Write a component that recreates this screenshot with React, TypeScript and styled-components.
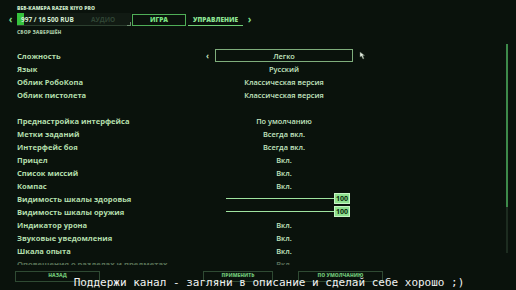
import React from 'react';
import styled, {createGlobalStyle} from 'styled-components';

const Global = createGlobalStyle`
  html, body { margin: 0; padding: 0; background: #0a120c; }
  body { width: 516px; height: 290px; overflow: hidden; }
`;

const Screen = styled.div`
  position: relative;
  width: 516px;
  height: 290px;
  background: #0a120c;
  font-family: 'Open Sans', 'Noto Sans', sans-serif;
  overflow: hidden;
  display: flex;
  flex-direction: column;
`;

const Header = styled.div`
  display: flex;
  flex-direction: column;
  padding: 5px 0 0 17px;
  height: 44px;
  flex-shrink: 0;
  box-sizing: border-box;
`;

const Tiny = styled.div<{$dim?: boolean}>`
  font-size: 5px;
  font-weight: 800;
  letter-spacing: 0.1px;
  line-height: 6px;
  color: ${(p) => (p.$dim ? '#9fbf9c' : '#c9e4c5')};
`;

const TabRow = styled.div`
  display: flex;
  align-items: center;
  height: 13px;
  margin: 2px 0 3px -13px;
`;

const Chevron = styled.span`
  width: 13px;
  font-size: 10px;
  font-weight: 700;
  color: #7fdc86;
  line-height: 13px;
  text-align: center;
`;

const Wallet = styled.div`
  position: relative;
  display: flex;
  align-items: center;
  width: 114px;
  height: 12px;
  background: #111a13;
  border-bottom: 1px solid #2c3f2f;
  &::after {
    content: '';
    position: absolute;
    right: 0;
    bottom: -1px;
    width: 3px;
    height: 3px;
    border-right: 1px solid #6f8f70;
    border-bottom: 1px solid #6f8f70;
  }
`;

const WalletFill = styled.div`
  position: absolute;
  left: 0;
  top: 0;
  bottom: 0;
  width: 7px;
  background: #36c23d;
`;

const WalletText = styled.span`
  position: relative;
  padding-left: 4px;
  font-size: 6.5px;
  font-weight: 700;
  color: #d5ecd2;
  width: 70px;
`;

const Dim = styled.span`
  font-size: 6.5px;
  font-weight: 700;
  color: #2f4433;
`;

const Tab = styled.div<{$active?: boolean}>`
  position: relative;
  display: flex;
  align-items: center;
  justify-content: center;
  height: 12px;
  box-sizing: border-box;
  font-size: 6.5px;
  font-weight: 800;
  color: ${(p) => (p.$active ? '#7be383' : '#8de293')};
  border: ${(p) => (p.$active ? '1px solid #4fae57' : 'none')};
  border-bottom: 1px solid ${(p) => (p.$active ? '#4fae57' : '#6fcf76')};
  width: ${(p) => (p.$active ? '54px' : '55px')};
  margin-left: ${(p) => (p.$active ? '1px' : '2px')};
`;

const Body = styled.div`
  display: flex;
  flex: 1;
  min-height: 0;
  overflow: hidden;
`;

const List = styled.div`
  flex: 1;
  display: flex;
  flex-direction: column;
  padding-top: 5px;
`;

const Row = styled.div<{$fade?: boolean}>`
  display: grid;
  grid-template-columns: 189px 9px 138px 20px;
  align-items: center;
  flex-shrink: 0;
  height: 13px;
  padding-left: 17px;
  opacity: ${(p) => (p.$fade ? 0.45 : 1)};
`;

const Label = styled.span`
  font-size: 7.6px;
  font-weight: 700;
  color: #b3dfab;
  white-space: nowrap;
`;

const Arrow = styled.span`
  font-size: 8px;
  font-weight: 700;
  color: #c9e8c4;
`;

const Value = styled.div<{$boxed?: boolean}>`
  display: flex;
  align-items: center;
  justify-content: center;
  height: 13px;
  box-sizing: border-box;
  font-size: 7.4px;
  font-weight: 600;
  color: #c4e6c0;
  border: ${(p) => (p.$boxed ? '1px solid #7fae7c' : 'none')};
  white-space: nowrap;
`;

const Gap = styled.div`
  height: 13px;
  flex-shrink: 0;
`;

const Slider = styled.div`
  display: flex;
  align-items: center;
  margin-left: 11px;
  width: 124px;
`;

const Track = styled.div`
  flex: 1;
  height: 1px;
  background: #9fe4a0;
  margin-right: -6px;
`;

const Num = styled.span`
  position: relative;
  background: #8ee08e;
  color: #0a2a0d;
  font-size: 7px;
  font-weight: 700;
  line-height: 9px;
  padding: 0 1px;
  border: 1px solid #c6f5c3;
`;

const Cursor = styled.svg`
  margin-left: 6px;
`;

const Scroll = styled.div`
  width: 2px;
  margin: -1px 8px 0 0;
  height: 210px;
  flex-shrink: 0;
  background: #1d2c20;
  display: flex;
  flex-direction: column;
`;

const Thumb = styled.div`
  height: 164px;
  background: #3d8a4a;
`;

const Footer = styled.div`
  display: flex;
  align-items: flex-end;
  height: 25px;
  flex-shrink: 0;
  box-sizing: border-box;
  padding: 0 0 8px 15px;
`;

const Button = styled.div<{$w: number; $ml: number}>`
  width: ${(p) => p.$w}px;
  margin-left: ${(p) => p.$ml}px;
  height: 11px;
  box-sizing: border-box;
  border: 1px solid #2f4a33;
  display: flex;
  align-items: flex-start;
  justify-content: center;
  font-size: 5px;
  font-weight: 800;
  color: #6bbf72;
  line-height: 6px;
`;

const Subtitle = styled.div`
  position: absolute;
  left: 0;
  right: 0;
  bottom: 0;
  text-align: center;
  font-family: 'DejaVu Sans Mono', monospace;
  font-size: 11px;
  line-height: 15px;
  color: #f2f2f2;
  padding-left: 22px;
`;

type Item = {label: string; value?: string; slider?: boolean; selected?: boolean};

const groupA: Item[] = [
  {label: 'Сложность', value: 'Легко', selected: true},
  {label: 'Язык', value: 'Русский'},
  {label: 'Облик РобоКопа', value: 'Классическая версия'},
  {label: 'Облик пистолета', value: 'Классическая версия'},
];

const groupB: Item[] = [
  {label: 'Преднастройка интерфейса', value: 'По умолчанию'},
  {label: 'Метки заданий', value: 'Всегда вкл.'},
  {label: 'Интерфейс боя', value: 'Всегда вкл.'},
  {label: 'Прицел', value: 'Вкл.'},
  {label: 'Список миссий', value: 'Вкл.'},
  {label: 'Компас', value: 'Вкл.'},
  {label: 'Видимость шкалы здоровья', slider: true},
  {label: 'Видимость шкалы оружия', slider: true},
  {label: 'Индикатор урона', value: 'Вкл.'},
  {label: 'Звуковые уведомления', value: 'Вкл.'},
  {label: 'Шкала опыта', value: 'Вкл.'},
];

function SettingRow({item}: {item: Item}) {
  return (
    <Row>
      <Label>{item.label}</Label>
      <Arrow>{item.selected ? '‹' : ''}</Arrow>
      {item.slider ? (
        <Slider>
          <Track />
          <Num>100</Num>
        </Slider>
      ) : (
        <Value $boxed={item.selected}>{item.value}</Value>
      )}
      {item.selected ? (
        <Cursor width="7" height="10" viewBox="0 0 7 10">
          <path d="M1 1 L1 6 L2.5 5 L4 8 L5 7.5 L3.7 4.6 L5.6 4.4 Z" fill="#e8f0e6" stroke="#5a6a58" strokeWidth="0.5" />
        </Cursor>
      ) : (
        <span />
      )}
    </Row>
  );
}

export default function App() {
  return (
    <Screen>
      <Global />
      <Header>
        <Tiny>ВЕБ-КАМЕРА RAZER KIYO PRO</Tiny>
        <TabRow>
          <Chevron>‹</Chevron>
          <Wallet>
            <WalletFill />
            <WalletText>997 / 16 500 RUB</WalletText>
            <Dim>АУДИО</Dim>
          </Wallet>
          <Tab $active>ИГРА</Tab>
          <Tab>УПРАВЛЕНИЕ</Tab>
          <Chevron>›</Chevron>
        </TabRow>
        <Tiny $dim>СБОР ЗАВЕРШЁН</Tiny>
      </Header>
      <Body>
        <List>
          {groupA.map((it) => (
            <SettingRow key={it.label} item={it} />
          ))}
          <Gap />
          {groupB.map((it) => (
            <SettingRow key={it.label} item={it} />
          ))}
          <Row $fade>
            <Label>Оповещения о разделах и предметах</Label>
            <span />
            <Value>Вкл.</Value>
          </Row>
        </List>
        <Scroll>
          <Thumb />
        </Scroll>
      </Body>
      <Footer>
        <Button $w={85} $ml={0}>НАЗАД</Button>
        <Button $w={70} $ml={103}>ПРИМЕНИТЬ</Button>
        <Button $w={85} $ml={25}>ПО УМОЛЧАНИЮ</Button>
      </Footer>
      <Subtitle>Поддержи канал - загляни в описание и сделай себе хорошо ;)</Subtitle>
    </Screen>
  );
}
